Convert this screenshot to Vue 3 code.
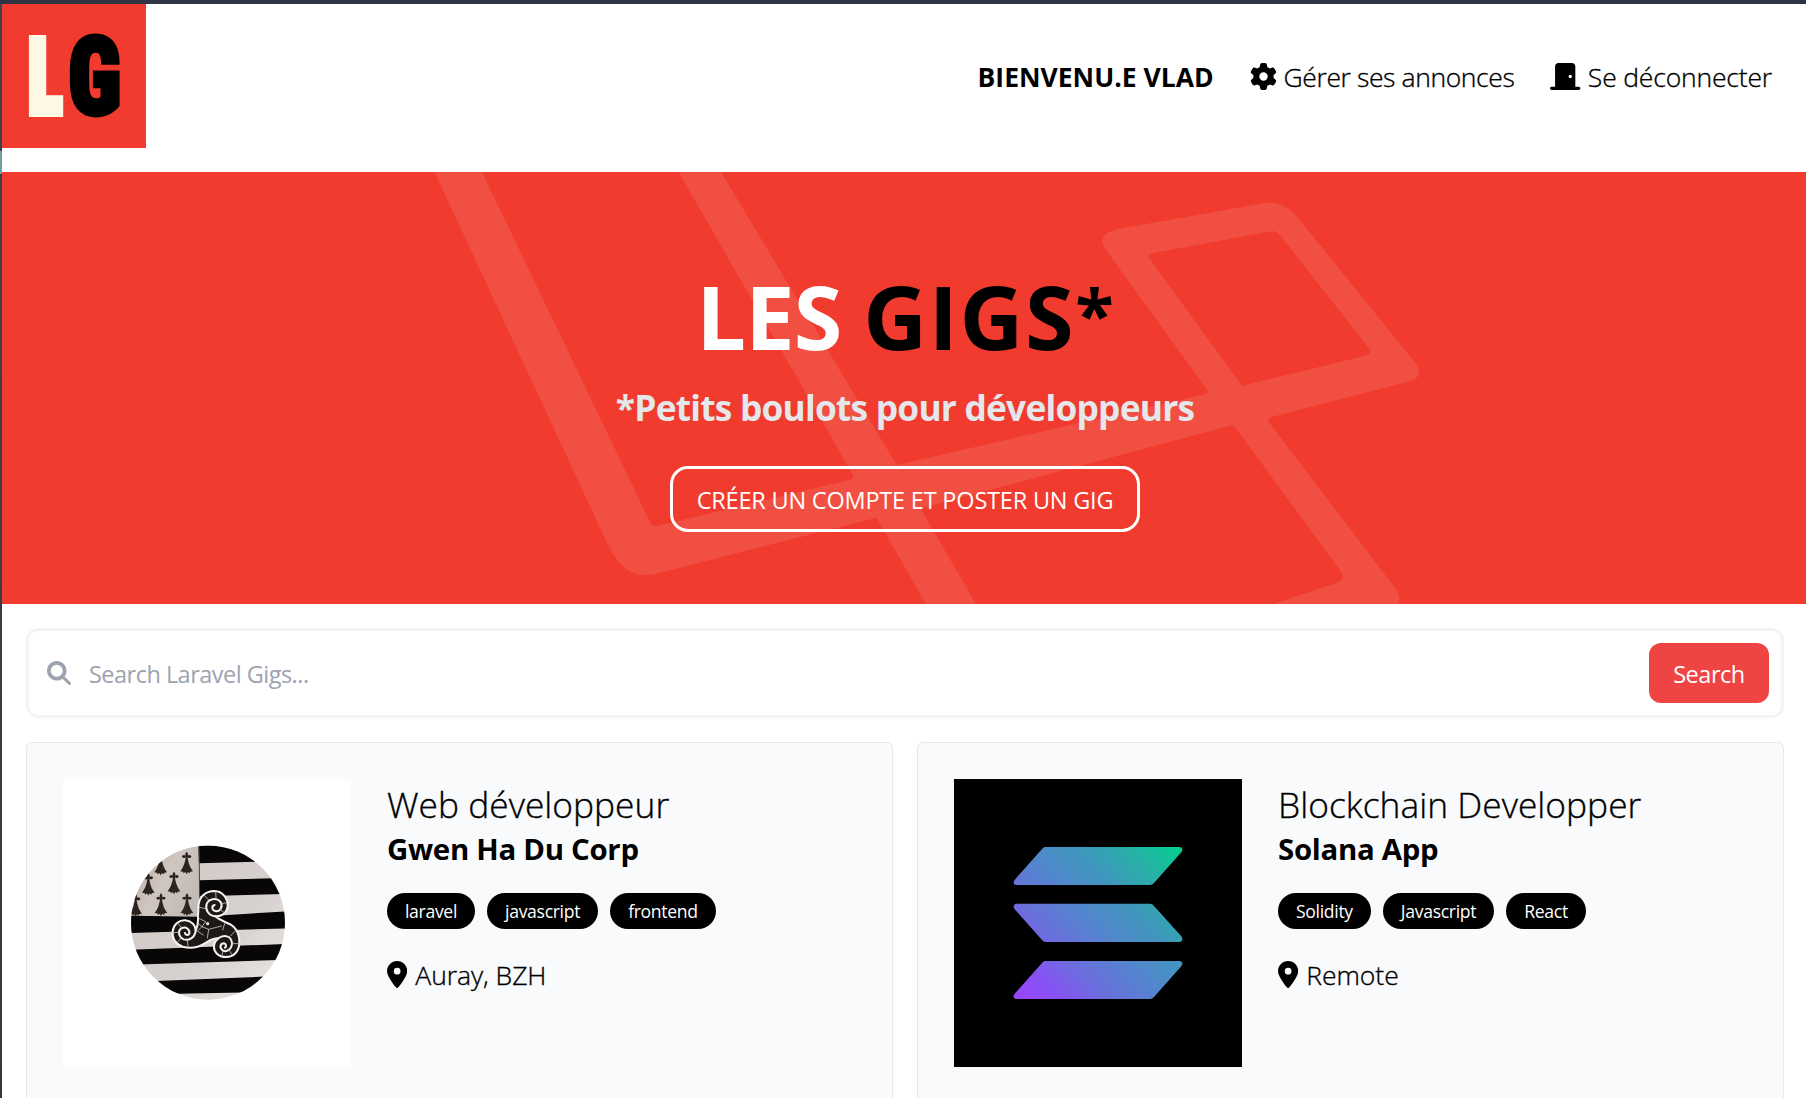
<script setup>
const listings = [
  {
    title: 'Web développeur',
    company: 'Gwen Ha Du Corp',
    tags: ['laravel', 'javascript', 'frontend'],
    location: 'Auray, BZH',
    logo: 'breton',
  },
  {
    title: 'Blockchain Developper',
    company: 'Solana App',
    tags: ['Solidity', 'Javascript', 'React'],
    location: 'Remote',
    logo: 'solana',
  },
]

// Ermine spots of the flag canton
const ermines = [
  [152, 100], [230, 97], [115, 161], [192, 157], [77, 224], [153, 222], [231, 222],
]
</script>

<template>
  <div class="desktop">
    <div class="page">
      <nav class="topbar">
        <svg class="logo" viewBox="0 0 144 144" aria-label="LG">
          <rect width="144" height="144" fill="#f03b2e" />
          <text class="logo-l" transform="translate(26.300 109) scale(.68 1)">L</text>
          <text class="logo-g" transform="translate(66.200 110) scale(.83 1)">G</text>
        </svg>
        <ul class="links">
          <li class="welcome">BIENVENU.E VLAD</li>
          <li>
            <svg class="gear" viewBox="0 0 512 512"><path d="M495.9 166.6c3.200 8.700 .5 18.400-6.400 24.600l-43.300 39.400c1.100 8.300 1.700 16.800 1.700 25.400s-.6 17.100-1.700 25.400l43.300 39.400c6.900 6.200 9.600 15.900 6.400 24.600c-4.400 11.900-9.700 23.300-15.800 34.300l-4.700 8.100c-6.600 11-14 21.400-22.100 31.200c-5.900 7.200-15.700 9.600-24.500 6.800l-55.700-17.700c-13.400 10.300-28.200 18.900-44 25.400l-12.500 57.100c-2 9.100-9 16.300-18.200 17.800c-13.800 2.300-28 3.500-42.500 3.500s-28.700-1.200-42.500-3.500c-9.200-1.500-16.200-8.700-18.200-17.800l-12.500-57.100c-15.800-6.500-30.600-15.100-44-25.400L83.100 425.900c-8.800 2.800-18.600 .3-24.500-6.800c-8.100-9.800-15.500-20.200-22.100-31.200l-4.700-8.100c-6.100-11-11.400-22.400-15.800-34.300c-3.200-8.700-.5-18.400 6.400-24.600l43.300-39.400C64.600 273.100 64 264.600 64 256s.6-17.100 1.700-25.400L22.400 191.200c-6.900-6.200-9.600-15.900-6.400-24.600c4.400-11.900 9.700-23.300 15.800-34.300l4.700-8.100c6.600-11 14-21.400 22.100-31.200c5.900-7.200 15.700-9.600 24.500-6.800l55.700 17.700c13.400-10.300 28.200-18.900 44-25.400l12.500-57.100c2-9.100 9-16.300 18.200-17.800C227.300 1.200 241.500 0 256 0s28.700 1.200 42.500 3.500c9.200 1.500 16.200 8.700 18.200 17.800l12.500 57.100c15.800 6.500 30.600 15.100 44 25.400l55.700-17.700c8.800-2.800 18.600-.3 24.500 6.800c8.100 9.800 15.500 20.200 22.100 31.200l4.700 8.100c6.100 11 11.400 22.400 15.800 34.300zM256 336a80 80 0 1 0 0-160 80 80 0 1 0 0 160z" /></svg>
            <span class="manage">Gérer ses annonces</span>
          </li>
          <li>
            <svg class="door" viewBox="0 0 576 512"><path d="M96 64c0-35.300 28.700-64 64-64H416c35.300 0 64 28.700 64 64V448h64c17.700 0 32 14.300 32 32s-14.300 32-32 32H432 144 32c-17.700 0-32-14.300-32-32s14.300-32 32-32H96V64zM384 288a32 32 0 1 0 0-64 32 32 0 1 0 0 64z" /></svg>
            <span class="logout">Se déconnecter</span>
          </li>
        </ul>
      </nav>

      <section class="hero">
        <svg class="hero-mark" viewBox="2 172 1806 432" width="1806" height="432">
          <path fill-rule="evenodd" d="M434.500 172L608 545Q623 576 646 575Q651 575 659 573L876.700 517.700L925.800 604H975.800L920.700 508.500L1229 426Q1233 424.500 1235 427L1342 573Q1344 577 1342 579.500Q1340 581.500 1336 583L1262 608H1395Q1403 600 1396 589L1268 421Q1267 419 1270 417.500L1409 381.500Q1424 377 1417 365L1299 219Q1283 200 1265 203L1115 229.500Q1097 235 1104.500 248L1208 391Q1209 393 1206 394L896.700 465L721 172H678.500L853 475Q854 478 851 479.500L657 526Q653 527 651 524L482 172ZM1151 253.500L1270 231.500Q1276 230 1280 235L1369.500 349Q1373 353 1366 355.500L1242 385.700L1149 258Q1147 254.500 1151 253.500Z" />
        </svg>
        <h1>LES <span class="gigs">GIGS<span class="star">*</span></span></h1>
        <p class="tagline">*Petits boulots pour développeurs</p>
        <a class="cta">CRÉER UN COMPTE ET POSTER UN GIG</a>
      </section>

      <form class="search" @submit.prevent>
        <svg class="glass" viewBox="0 0 512 512"><path d="M416 208c0 45.900-14.900 88.300-40 122.700L502.600 457.400c12.500 12.500 12.500 32.800 0 45.300s-32.800 12.500-45.300 0L330.700 376c-34.400 25.200-76.800 40-122.700 40C93.100 416 0 322.900 0 208S93.100 0 208 0S416 93.100 416 208zM208 336a128 128 0 1 0 0-256 128 128 0 1 0 0 256z" /></svg>
        <input type="text" placeholder="Search Laravel Gigs..." />
        <button type="submit">Search</button>
      </form>

      <main class="grid">
        <article v-for="job in listings" :key="job.title" class="card">
          <svg v-if="job.logo === 'breton'" class="picture" viewBox="63 779 288 288">
            <defs>
              <clipPath id="badge"><ellipse cx="294" cy="308" rx="231" ry="231" /></clipPath>
              <linearGradient id="metal" x1="0" y1="0" x2="1" y2="1">
                <stop offset="0" stop-color="#c9bdb6" />
                <stop offset=".3" stop-color="#d3cbc8" />
                <stop offset=".6" stop-color="#d6d1d0" />
                <stop offset="1" stop-color="#efe9e4" />
              </linearGradient>
              <linearGradient id="canton" x1="0" y1="0" x2="1" y2=".6">
                <stop offset="0" stop-color="#bda79a" />
                <stop offset=".6" stop-color="#d0c6c1" />
                <stop offset="1" stop-color="#c2bab6" />
              </linearGradient>
            </defs>
            <rect x="63" y="779" width="288" height="288" fill="#fff" />
            <g transform="translate(110 820) scale(.33333)">
              <g clip-path="url(#badge)">
                <rect x="60" y="70" width="470" height="475" fill="url(#metal)" />
                <path d="M60 70H267L270 289L60 287Z" fill="url(#canton)" />
                <path fill="#080606" d="M265 70H440V125L267 130ZM268 181L520 174V222L269 229ZM60 287L270 290L530 274V325L60 339ZM60 389L530 372V419L60 434ZM120 484L480 469V516L120 523Z" />
                <path d="M267 75L270 290" stroke="#4a413d" stroke-width="3" />
                <g fill="#2b2320">
                  <path v-for="([x, y], i) in ermines" :key="i" :transform="`translate(${x} ${y})`" d="M0 -2C5 3 5 7 3 10C8 6 14 9 14 13C12 18 6 17 3 15C5 35 12 48 19 57L11 58L9 63L4 59L0 66L-4 59L-9 63L-11 58L-19 57C-12 48 -5 35 -3 15C-6 17 -12 18 -14 13C-14 9 -8 6 -3 10C-5 7 -5 3 0 -2Z" />
                </g>
              </g>
              <g fill="none" stroke-linecap="round" stroke-linejoin="round">
                <path fill="#1c1917" stroke="#f6f3f1" stroke-width="6" d="M264 300C263 285 266 275 265 263C265 232 285 213 314 213C338 214 353 234 353 257C351 280 334 290 316 289C330 302 345 305 361 313C382 325 390 350 388 371C386 396 370 411 348 411C324 411 311 395 312 379C313 366 318 360 325 355C305 354 295 365 283 371C265 382 240 386 218 380C197 372 186 355 188 334C191 312 207 300 226 301C246 303 257 316 257 331Q264 318 264 300Z" />
                <path stroke="#f6f3f1" stroke-width="6" d="M316 289C295 287 285 269 290 252C296 236 319 232 331 245C341 259 330 276 316 273C305 271 304 257 314 255M257 331C256 352 237 363 221 358C205 351 202 331 216 324C229 319 240 329 238 340C235 348 226 346 225 339M325 355C342 341 364 349 366 369C366 388 349 398 338 391C327 383 331 370 342 370C349 372 350 380 345 383" />
                <path stroke="#c9c4c1" stroke-width="2.500" d="M268 262L288 266M283 226L297 241M317 214L318 234M350 248L333 251M344 279L331 268M266 295L287 305L276 320L296 328L292 354M296 328L335 318M276 320L262 333L280 345M188 338L205 337M203 366L212 355M234 381L232 360M204 310L215 324M344 311L338 330M378 331L360 349M387 371L366 371M367 405L356 389M335 410L339 393M265 310L276 320" />
                <circle cx="293" cy="311" r="5" fill="#ddd" />
              </g>
            </g>
          </svg>
          <svg v-else class="picture" viewBox="0 0 288 288">
            <defs>
              <linearGradient id="sol" gradientUnits="userSpaceOnUse" x1="62" y1="220" x2="226" y2="66">
                <stop offset="0" stop-color="#9945ff" />
                <stop offset=".14" stop-color="#8752f3" />
                <stop offset=".3" stop-color="#6a6fdc" />
                <stop offset=".5" stop-color="#5088cc" />
                <stop offset=".65" stop-color="#4096bd" />
                <stop offset=".82" stop-color="#28b0a8" />
                <stop offset="1" stop-color="#00d18c" />
              </linearGradient>
            </defs>
            <rect width="288" height="288" fill="#000" />
            <path fill="url(#sol)" d="M91 68H226Q230 69 227.500 73L200 104Q198.500 106 196 106H62Q58 105 60.500 101L88 70Q89.500 68 91 68ZM62 124.800H196Q198.500 124.800 200 127L227.500 157.500Q230 162 226 163H92Q89.500 163 88 161L60.500 130Q58 126 62 124.800ZM91 182H226Q230 183 227.500 187L200 218Q198.500 220 196 220H62Q58 219 60.500 215L88 184Q89.500 182 91 182Z" />
          </svg>
          <div class="info">
            <h3>{{ job.title }}</h3>
            <div class="company">{{ job.company }}</div>
            <ul class="tags">
              <li v-for="tag in job.tags" :key="tag">{{ tag }}</li>
            </ul>
            <div class="location">
              <svg class="pin" viewBox="0 0 384 512"><path d="M215.700 499.200C267 435 384 279.400 384 192C384 86 298 0 192 0S0 86 0 192c0 87.400 117 243 168.300 307.200c12.300 15.300 35.100 15.300 47.400 0zM192 128a64 64 0 1 1 0 128 64 64 0 1 1 0-128z" /></svg>
              <span>{{ job.location }}</span>
            </div>
          </div>
        </article>
      </main>
    </div>
  </div>
</template>

<style>
body {
  overflow: hidden;
}
</style>

<style scoped>
* {
  box-sizing: border-box;
  margin: 0;
  padding: 0;
}
.desktop {
  height: 1098px;
  overflow: hidden;
  padding: 4px 0 0 2px;
  background:
    linear-gradient(#6f9f9f, #6f9f9f) 0 151px / 2px 23px no-repeat,
    linear-gradient(#303344, #303344) 0 0 / 100% 4px no-repeat,
    linear-gradient(#40424d, #33383f);
  font-family: "Open Sans", "Noto Sans", sans-serif;
  color: #000;
}
.page {
  width: 1806px;
  height: 1094px;
  overflow: hidden;
  background: #fff;
}
ul {
  list-style: none;
}
.topbar {
  display: flex;
  justify-content: space-between;
  align-items: center;
  margin-bottom: 24px;
  padding-right: 36px;
}
.logo {
  width: 144px;
  height: 144px;
}
.logo text {
  font-family: Roboto, sans-serif;
  font-weight: 900;
  font-stretch: 75%;
  font-size: 108px;
}
.logo .logo-l {
  font-size: 104px;
  fill: #fff8e5;
  stroke: #fff8e5;
  stroke-width: 8px;
}
.logo-g {
  fill: #000;
  stroke: #000;
  stroke-width: 5px;
}
.links {
  display: flex;
  align-items: center;
  gap: 36px;
  font-size: 26.5px;
  font-weight: 300;
  line-height: 40px;
}
.links li {
  display: flex;
  align-items: center;
  white-space: nowrap;
}
.links .welcome {
  padding-top: 1px;
  font-weight: 700;
  letter-spacing: 0;
}
.gear {
  width: 27px;
  height: 27px;
  margin-right: 7px;
}
.door {
  width: 30.4px;
  height: 27px;
  margin-right: 7px;
}
.manage,
.logout {
  padding-top: 1px;
  -webkit-text-stroke: 0.35px #000;
}
.manage {
  letter-spacing: -0.39px;
}
.logout {
  letter-spacing: -0.17px;
}
.hero {
  position: relative;
  display: flex;
  flex-direction: column;
  align-items: center;
  height: 432px;
  padding-top: 98.8px;
  background: #f03b2e;
  overflow: hidden;
}
.hero-mark {
  position: absolute;
  inset: 0;
  fill: #f14f42;
}
.hero h1,
.hero p,
.hero a {
  position: relative;
  white-space: nowrap;
}
.hero h1 {
  height: 90px;
  font-size: 88.2px;
  font-weight: 700;
  line-height: 90px;
  letter-spacing: -0.94px;
  color: #fff;
}
.gigs {
  color: #000;
  letter-spacing: 1.6px;
}
.star {
  font-size: 0.8em;
  line-height: 1;
  letter-spacing: 0;
  vertical-align: 10.5px;
}
.tagline {
  margin-top: 26.5px;
  font-size: 35.3px;
  font-weight: 700;
  line-height: 40px;
  letter-spacing: -0.78px;
  color: #e5e7eb;
}
.cta {
  margin-top: 38.7px;
  width: 470px;
  height: 66px;
  padding-top: 1px;
  border: 3px solid #fff;
  border-radius: 18px;
  font-size: 23.5px;
  line-height: 60px;
  letter-spacing: -0.2px;
  text-align: center;
  color: #fff;
}
.search {
  display: flex;
  align-items: center;
  height: 90px;
  margin: 24px;
  padding: 0 12px 0 18px;
  border: 3px solid #f3f4f6;
  border-radius: 12px;
}
.glass {
  width: 24px;
  height: 24px;
  fill: #9ca3af;
}
.search input {
  flex: 1;
  height: 60px;
  padding: 2px 0 0 18px;
  border: 0;
  outline: 0;
  background: none;
  font: 400 23.5px "Open Sans", sans-serif;
  letter-spacing: -0.52px;
}
.search input::placeholder {
  color: #9ca3af;
  opacity: 1;
}
.search button {
  width: 120px;
  height: 60px;
  padding-top: 2px;
  border: 0;
  border-radius: 12px;
  background: #ef4444;
  color: #fff;
  font: 400 23.5px "Open Sans", sans-serif;
  letter-spacing: -0.46px;
}
.grid {
  display: grid;
  grid-template-columns: 1fr 1fr;
  gap: 24px;
  margin: 0 24px;
}
.card {
  display: flex;
  gap: 36px;
  height: 400px;
  padding: 36px;
  border: 1px solid #e5e7eb;
  border-radius: 6px;
  background: #f9fafc;
}
.picture {
  flex: none;
  width: 288px;
  height: 288px;
}
.info {
  padding-top: 4.3px;
}
.info h3 {
  font-size: 35.3px;
  font-weight: 300;
  line-height: 42px;
  letter-spacing: 0.03px;
  -webkit-text-stroke: 0.35px #000;
}
.company {
  margin-top: 3.3px;
  font-size: 29.4px;
  font-weight: 700;
  line-height: 40px;
  letter-spacing: -0.3px;
}
.tags {
  display: flex;
  gap: 12px;
  margin-top: 24.4px;
}
.tags li {
  height: 36px;
  padding: 0 18px;
  border-radius: 18px;
  background: #000;
  color: #fff;
  font-size: 17.6px;
  line-height: 36px;
  letter-spacing: -0.32px;
}
.location {
  display: flex;
  align-items: center;
  margin-top: 27.7px;
  font-size: 26.5px;
  font-weight: 300;
  line-height: 36px;
  letter-spacing: -0.05px;
  -webkit-text-stroke: 0.35px #000;
}
.pin {
  width: 20.3px;
  height: 27px;
  margin-right: 8px;
}
</style>
